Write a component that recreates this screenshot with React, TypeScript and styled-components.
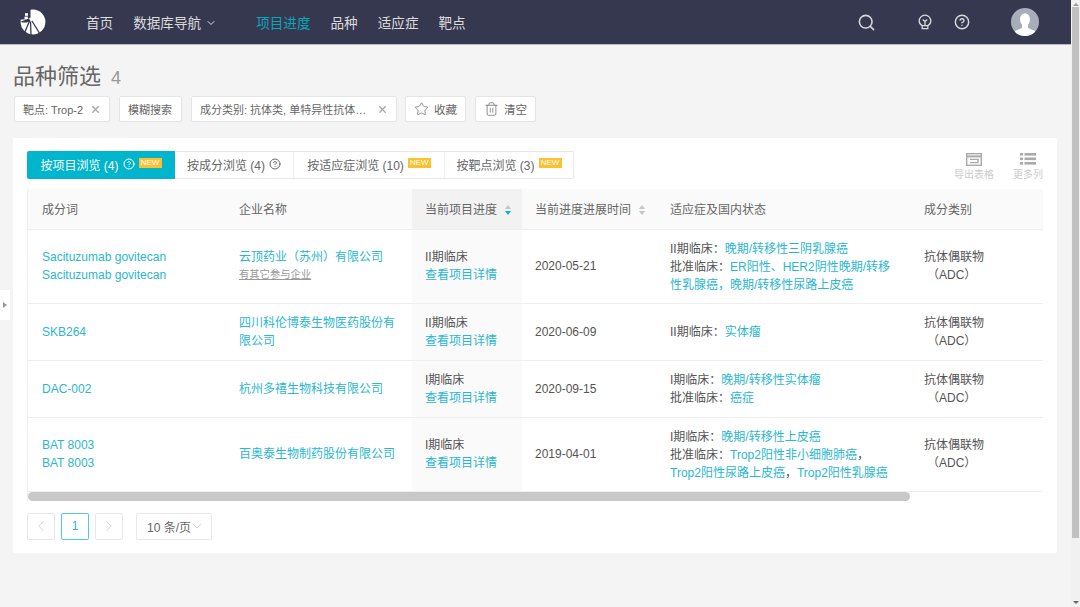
import React from "react";
import styled, { createGlobalStyle } from "styled-components";
import { Search, X, Star, Trash2, ChevronDown, ChevronLeft, ChevronRight, CircleHelp } from "lucide-react";

const FONT = `"Liberation Sans", "Noto Sans CJK SC", sans-serif`;
const LINK = "#2bb7d0";
const TEXT = "#555";

const Global = createGlobalStyle`
  html, body { margin: 0; padding: 0; height: 607px; overflow: hidden; background: #f4f4f4; }
  * { box-sizing: border-box; }
  body { font-family: ${FONT}; font-size: 12px; color: ${TEXT}; }
`;

const Shell = styled.div`
  display: flex;
  width: 1080px;
  height: 607px;
  position: relative;
`;
const Main = styled.div`
  flex: 1;
  min-width: 0;
  display: flex;
  flex-direction: column;
`;
const PageBar = styled.div`
  width: 9px;
  background: #f1f1f1;
  display: flex;
  flex-direction: column;
  align-items: center;
  padding: 3px 1px 3px;
`;
const PageBarArrow = styled.div<{ $down?: boolean }>`
  width: 0;
  height: 0;
  flex: none;
  border-left: 3px solid transparent;
  border-right: 3px solid transparent;
  ${(p) => (p.$down ? "border-top: 3px solid #666; margin-top: auto;" : "border-bottom: 3px solid #999;")}
`;
const PageBarThumb = styled.div`
  width: 100%;
  height: 531px;
  margin-top: 1px;
  flex: none;
  background: #c1c1c1;
`;

const Nav = styled.header`
  height: 45px;
  flex: none;
  background: #36384f;
  border-bottom: 1px solid #b9bac4;
  display: flex;
  align-items: center;
  padding: 0 32px 0 20px;
`;
const Logo = styled.svg`
  width: 26px;
  height: 26px;
  flex: none;
  margin-right: 40px;
`;
const NavItem = styled.a<{ $active?: boolean }>`
  font-size: 13.6px;
  color: ${(p) => (p.$active ? "#0ba5bc" : "#dcdcdc")};
  display: inline-flex;
  align-items: center;
  margin-right: 20px;
  white-space: nowrap;
`;
const NavCaret = styled(ChevronDown)`
  margin-left: 4px;
  margin-top: 2px;
`;
const NavDivider = styled.span`
  width: 19px;
  flex: none;
`;
const NavRight = styled.div`
  margin-left: auto;
  display: flex;
  align-items: center;
`;
const NavIcon = styled.span<{ $gap: number }>`
  display: inline-flex;
  margin-right: ${(p) => p.$gap}px;
  color: #d8d8d8;
`;
const Avatar = styled.svg`
  width: 28px;
  height: 28px;
  display: block;
`;

const Content = styled.main`
  flex: 1;
  padding: 0 14px 0 13px;
`;
const TitleRow = styled.div`
  height: 51px;
  padding: 17px 0 0 0;
  display: flex;
  align-items: baseline;
  line-height: 30px;
`;
const Title = styled.h1`
  margin: 0;
  font-size: 22px;
  font-weight: 400;
  color: #666;
`;
const Count = styled.span`
  font-size: 18px;
  color: #999;
  margin-left: 10px;
`;
const FilterRow = styled.div`
  display: flex;
  height: 26px;
  gap: 9px;
  padding-left: 1px;
`;
const Chip = styled.div<{ $w: number; $tight?: boolean }>`
  width: ${(p) => p.$w}px;
  height: 26px;
  margin-right: ${(p) => (p.$tight ? "-1px" : "0")};
  background: #fff;
  border: 1px solid #e4e4e4;
  border-radius: 2px;
  padding: 0 8px;
  display: flex;
  align-items: center;
  justify-content: space-between;
  font-size: 11px;
  color: #666;
  white-space: nowrap;
`;
const ChipClose = styled(X)`
  color: #aaa;
`;
const ActionBtn = styled(Chip)`
  justify-content: flex-start;
  gap: 5px;
  font-size: 11.5px;
`;

const Card = styled.section`
  margin-top: 16px;
  height: 415px;
  background: #fff;
  padding: 13px 14px;
  border-radius: 2px;
`;
const TabRow = styled.div`
  height: 28px;
  display: flex;
  justify-content: space-between;
  align-items: flex-start;
`;
const Tabs = styled.div`
  display: flex;
  height: 28px;
  border: 1px solid #e8e8e8;
  border-radius: 2px;
`;
const Tab = styled.div<{ $active?: boolean; $w: number }>`
  width: ${(p) => p.$w}px;
  margin: ${(p) => (p.$active ? "-1px 0 -1px -1px" : "0")};
  padding-bottom: 2px;
  background: ${(p) => (p.$active ? "#00b5cc" : "#fff")};
  color: ${(p) => (p.$active ? "#fff" : "#666")};
  border-right: ${(p) => (p.$active ? "none" : "1px solid #eee")};
  border-radius: ${(p) => (p.$active ? "2px 0 0 2px" : "0")};
  display: flex;
  align-items: center;
  justify-content: center;
  white-space: nowrap;
  font-size: 12px;
  &:last-child { border-right: none; }
`;
const TabHelp = styled(CircleHelp)`
  margin-left: 4px;
`;
const NewBadge = styled.span`
  width: 23px;
  height: 10px;
  margin: -3px 0 0 4px;
  background: #fdc02f;
  color: #fff;
  font-size: 8px;
  line-height: 10px;
  text-align: center;
`;
const Tools = styled.div`
  display: flex;
  gap: 19px;
  margin-top: 2px;
`;
const Tool = styled.div`
  display: flex;
  flex-direction: column;
  align-items: center;
  gap: 3px;
  font-size: 10px;
  line-height: 12px;
  color: #ccc;
  svg { display: block; }
`;

const TableWrap = styled.div`
  margin-top: 10px;
  border-left: 1px solid #eee;
`;
const Table = styled.table`
  width: 1015px;
  border-collapse: collapse;
  table-layout: fixed;
`;
const Th = styled.th<{ $sorted?: boolean; $w: number; $pad?: number }>`
  width: ${(p) => p.$w}px;
  height: 40px;
  padding: 0 0 0 ${(p) => p.$pad ?? 14}px;
  text-align: left;
  font-weight: 400;
  font-size: 12px;
  color: #666;
  background: ${(p) => (p.$sorted ? "#f2f2f2" : "#fafafa")};
  border-bottom: 1px solid #eee;
  white-space: nowrap;
`;
const ThInner = styled.span`
  display: flex;
  align-items: center;
`;
const SortBox = styled.span`
  display: inline-flex;
  flex-direction: column;
  gap: 2px;
  margin-left: 8px;
  margin-top: 2px;
`;
const Caret = styled.i<{ $dir: "up" | "down"; $on?: boolean }>`
  display: block;
  width: 0;
  height: 0;
  border-left: 3.5px solid transparent;
  border-right: 3.5px solid transparent;
  ${(p) =>
    p.$dir === "up"
      ? `border-bottom: 4px solid ${p.$on ? "#00b5cc" : "#c4c4c4"};`
      : `border-top: 4px solid ${p.$on ? "#00b5cc" : "#c4c4c4"};`}
`;
const Tr = styled.tr<{ $h: number }>`
  height: ${(p) => p.$h}px;
`;
const Td = styled.td<{ $sorted?: boolean; $pad?: number; $nudge?: boolean }>`
  padding: ${(p) => (p.$nudge ? "1px" : "0")} 14px 0 ${(p) => p.$pad ?? 14}px;
  font-size: 12px;
  line-height: 18px;
  color: ${TEXT};
  background: ${(p) => (p.$sorted ? "#fafafa" : "#fff")};
  border-bottom: 1px solid #eee;
  vertical-align: middle;
`;
const CellLink = styled.a`
  color: ${LINK};
  display: block;
`;
const InlineLink = styled.span`
  color: ${LINK};
`;
const Sub = styled.a`
  display: block;
  color: #999;
  font-size: 10.3px;
  text-decoration: underline;
`;
const Indent = styled.span`
  display: block;
  padding-left: 3px;
`;
const HBar = styled.div`
  height: 9px;
  display: flex;
`;
const HThumb = styled.div`
  width: 882px;
  height: 9px;
  background: #c8c8c8;
  border-radius: 5px;
`;
const Pager = styled.div`
  margin-top: 12px;
  height: 27px;
  display: flex;
  gap: 6px;
`;
const PageBtn = styled.div<{ $active?: boolean }>`
  width: 28px;
  height: 27px;
  border: 1px solid ${(p) => (p.$active ? "#55c8d9" : "#e8e8e8")};
  border-radius: 2px;
  color: ${(p) => (p.$active ? "#2bb7d0" : "#c4c4c4")};
  display: flex;
  align-items: center;
  justify-content: center;
  font-size: 12px;
`;
const SizeSelect = styled.div`
  width: 76px;
  height: 27px;
  margin-left: 7px;
  border: 1px solid #e8e8e8;
  border-radius: 2px;
  display: flex;
  align-items: center;
  padding-left: 10px;
  color: #666;
  font-size: 12px;
  white-space: nowrap;
  svg { color: #bbb; margin-left: -2px; }
`;
const SideHandle = styled.div`
  position: absolute;
  left: 0;
  top: 290px;
  width: 10px;
  height: 30px;
  background: #fff;
  display: flex;
  align-items: center;
  justify-content: center;
`;
const SideArrow = styled.i`
  width: 0;
  height: 0;
  border-top: 3px solid transparent;
  border-bottom: 3px solid transparent;
  border-left: 4px solid #999;
`;

const LogoMark = () => (
  <Logo viewBox="0 0 26 26">
    <circle cx="13" cy="13" r="12.4" fill="#fff" />
    <path d="M0 0H10.5V8.5L7 10.5H0Z" fill="#36384f" />
    <rect x="5" y="4.2" width="3" height="2.6" fill="#fff" />
    <rect x="4.5" y="7.6" width="3.4" height="2.8" fill="#fff" />
    <path d="M1 12.5L9 9.5L10.5 12L3 15Z" fill="#36384f" />
    <path d="M9.5 12L4.5 24M10.5 12.5L11 26M12 12L20 25" stroke="#36384f" strokeWidth="1.3" fill="none" />
    <path d="M1 13.5H6.5V16H2Z" fill="#fff" />
  </Logo>
);
const Bulb = () => (
  <svg width="16" height="16" viewBox="0 0 16 16" fill="none" stroke="#d8d8d8" strokeWidth="1.3">
    <path d="M5.2 11.6C3.2 10.6 2.2 8.9 2.2 7A5.8 5.8 0 0 1 13.8 7C13.8 8.9 12.8 10.6 10.8 11.6Z" />
    <path d="M5.2 11.6V14.6H10.8V11.6" />
    <path d="M5.8 5.6L8 7.6L10.2 5.6M8 7.6V11.4" />
  </svg>
);
const TableIcon = () => (
  <svg width="16" height="13" viewBox="0 0 16 13" fill="none" stroke="#aaa" strokeWidth="1.4">
    <rect x="0.7" y="0.7" width="14.6" height="11.6" />
    <path d="M0.7 3.4H15.3" strokeWidth="2" />
    <path d="M4 6.4H12V9.6H4" />
  </svg>
);
const ListIcon = () => (
  <svg width="16" height="13" viewBox="0 0 16 13" fill="#aaa">
    {[0, 4.5, 9].map((y) => (
      <g key={y}>
        <rect x="0" y={y} width="3" height="2.6" />
        <rect x="4.5" y={y} width="11.5" height="2.6" />
      </g>
    ))}
  </svg>
);
const Sort = ({ on }: { on?: boolean }) => (
  <SortBox>
    <Caret $dir="up" />
    <Caret $dir="down" $on={on} />
  </SortBox>
);

const rows = [
  {
    h: 74,
    names: ["Sacituzumab govitecan", "Sacituzumab govitecan"],
    company: "云顶药业（苏州）有限公司",
    sub: "有其它参与企业",
    phase: "II期临床",
    date: "2020-05-21",
    ind: (
      <>
        II期临床：<InlineLink>晚期/转移性三阴乳腺癌</InlineLink>
        <br />
        批准临床：<InlineLink>ER阳性、HER2阴性晚期/转移性乳腺癌，晚期/转移性尿路上皮癌</InlineLink>
      </>
    ),
  },
  {
    h: 57,
    names: ["SKB264"],
    company: "四川科伦博泰生物医药股份有限公司",
    phase: "II期临床",
    date: "2020-06-09",
    ind: (
      <>
        II期临床：<InlineLink>实体瘤</InlineLink>
      </>
    ),
  },
  {
    h: 57,
    names: ["DAC-002"],
    company: "杭州多禧生物科技有限公司",
    phase: "I期临床",
    date: "2020-09-15",
    ind: (
      <>
        I期临床：<InlineLink>晚期/转移性实体瘤</InlineLink>
        <br />
        批准临床：<InlineLink>癌症</InlineLink>
      </>
    ),
  },
  {
    h: 74,
    names: ["BAT 8003", "BAT 8003"],
    company: "百奥泰生物制药股份有限公司",
    phase: "I期临床",
    date: "2019-04-01",
    ind: (
      <>
        I期临床：<InlineLink>晚期/转移性上皮癌</InlineLink>
        <br />
        批准临床：<InlineLink>Trop2阳性非小细胞肺癌</InlineLink>，<InlineLink>Trop2阳性尿路上皮癌</InlineLink>，
        <InlineLink>Trop2阳性乳腺癌</InlineLink>
      </>
    ),
  },
];

export default function App() {
  return (
    <Shell>
      <Global />
      <Main>
        <Nav>
          <LogoMark />
          <NavItem>首页</NavItem>
          <NavItem>
            数据库导航
            <NavCaret size={12} strokeWidth={2} />
          </NavItem>
          <NavDivider />
          <NavItem $active>项目进度</NavItem>
          <NavItem>品种</NavItem>
          <NavItem>适应症</NavItem>
          <NavItem>靶点</NavItem>
          <NavRight>
            <NavIcon $gap={41}>
              <Search size={19} strokeWidth={2} />
            </NavIcon>
            <NavIcon $gap={21}>
              <Bulb />
            </NavIcon>
            <NavIcon $gap={41}>
              <CircleHelp size={16} strokeWidth={2.2} />
            </NavIcon>
            <Avatar viewBox="0 0 28 28">
              <defs>
                <clipPath id="avatarClip">
                  <circle cx="14" cy="14" r="14" />
                </clipPath>
              </defs>
              <circle cx="14" cy="14" r="14" fill="#a9acb9" />
              <g clipPath="url(#avatarClip)" fill="#fff">
                <ellipse cx="14" cy="11.5" rx="5" ry="6.2" />
                <path d="M11 16H17V20L24 23V28H4V23L11 20Z" />
              </g>
            </Avatar>
          </NavRight>
        </Nav>
        <Content>
          <TitleRow>
            <Title>品种筛选</Title>
            <Count>4</Count>
          </TitleRow>
          <FilterRow>
            <Chip $w={96}>
              靶点: Trop-2
              <ChipClose size={11} strokeWidth={3} />
            </Chip>
            <Chip $w={63}>模糊搜索</Chip>
            <Chip $w={206} $tight>
              成分类别: 抗体类, 单特异性抗体…
              <ChipClose size={11} strokeWidth={3} />
            </Chip>
            <ActionBtn $w={61}>
              <Star size={16} strokeWidth={1.3} color="#777" />
              收藏
            </ActionBtn>
            <ActionBtn $w={61}>
              <Trash2 size={16} strokeWidth={1.3} color="#777" />
              清空
            </ActionBtn>
          </FilterRow>
          <Card>
            <TabRow>
              <Tabs>
                <Tab $active $w={148}>
                  按项目浏览 (4)
                  <TabHelp size={12} strokeWidth={2} />
                  <NewBadge>NEW</NewBadge>
                </Tab>
                <Tab $w={119}>
                  按成分浏览 (4)
                  <TabHelp size={12} strokeWidth={2} />
                </Tab>
                <Tab $w={151}>
                  按适应症浏览 (10)
                  <NewBadge>NEW</NewBadge>
                </Tab>
                <Tab $w={128}>
                  按靶点浏览 (3)
                  <NewBadge>NEW</NewBadge>
                </Tab>
              </Tabs>
              <Tools>
                <Tool>
                  <TableIcon />
                  导出表格
                </Tool>
                <Tool>
                  <ListIcon />
                  更多列
                </Tool>
              </Tools>
            </TabRow>
            <TableWrap>
              <Table>
                <thead>
                  <tr>
                    <Th $w={197}>成分词</Th>
                    <Th $w={187}>企业名称</Th>
                    <Th $w={110} $sorted $pad={13}>
                      <ThInner>
                        当前项目进度
                        <Sort on />
                      </ThInner>
                    </Th>
                    <Th $w={134} $pad={13}>
                      <ThInner>
                        当前进度进展时间
                        <Sort />
                      </ThInner>
                    </Th>
                    <Th $w={254}>适应症及国内状态</Th>
                    <Th $w={133}>成分类别</Th>
                  </tr>
                </thead>
                <tbody>
                  {rows.map((r) => (
                    <Tr key={r.date} $h={r.h}>
                      <Td>
                        {r.names.map((n, i) => (
                          <CellLink key={i}>{n}</CellLink>
                        ))}
                      </Td>
                      <Td>
                        <CellLink>{r.company}</CellLink>
                        {r.sub && <Sub>{r.sub}</Sub>}
                      </Td>
                      <Td $sorted $pad={13}>
                        {r.phase}
                        <CellLink>查看项目详情</CellLink>
                      </Td>
                      <Td $pad={13}>{r.date}</Td>
                      <Td $nudge>{r.ind}</Td>
                      <Td>
                        抗体偶联物
                        <Indent>（ADC）</Indent>
                      </Td>
                    </Tr>
                  ))}
                </tbody>
              </Table>
              <HBar>
                <HThumb />
              </HBar>
            </TableWrap>
            <Pager>
              <PageBtn>
                <ChevronLeft size={18} strokeWidth={1} />
              </PageBtn>
              <PageBtn $active>1</PageBtn>
              <PageBtn>
                <ChevronRight size={18} strokeWidth={1} />
              </PageBtn>
              <SizeSelect>
                10 条/页
                <ChevronDown size={16} strokeWidth={1} />
              </SizeSelect>
            </Pager>
          </Card>
        </Content>
      </Main>
      <PageBar>
        <PageBarArrow />
        <PageBarThumb />
        <PageBarArrow $down />
      </PageBar>
      <SideHandle>
        <SideArrow />
      </SideHandle>
    </Shell>
  );
}
